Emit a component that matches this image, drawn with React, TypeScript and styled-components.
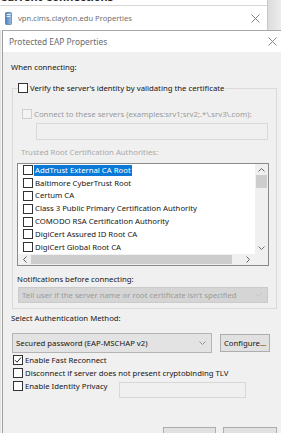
import styled, { createGlobalStyle } from "styled-components";

const GlobalStyle = createGlobalStyle`
  html, body {
    margin: 0;
    padding: 0;
    background: #ffffff;
  }
  body {
    font-family: "Noto Sans", "Open Sans", sans-serif;
    font-size: 7.75px;
    line-height: 12px;
    color: #151515;
  }
  * {
    box-sizing: border-box;
  }
`;

const Screen = styled.div`
  width: 281px;
  height: 433px;
  overflow: hidden;
  display: flex;
  flex-direction: column;
  background: #ffffff;
`;

/* ---- window behind ---- */

const TopArea = styled.div`
  display: flex;
  height: 30px;
  flex-shrink: 0;
`;

const BackWindow = styled.div`
  width: 268px;
  display: flex;
  flex-direction: column;
  border-right: 1px solid #c8c8c8;
`;

const CutHeading = styled.div`
  height: 5px;
  overflow: hidden;
`;

const CutText = styled.span`
  display: block;
  margin-top: -9px;
  font-size: 11px;
  line-height: 12px;
  font-weight: 700;
  color: #2a2a2a;
`;

const BackTitleBar = styled.div`
  flex: 1;
  display: flex;
  align-items: center;
  gap: 6px;
  padding: 0 7px 0 5px;
  border-top: 1px solid #d6d6d6;
  color: #707070;
  font-size: 7.6px;
`;

const Shade = styled.div`
  flex: 1;
  background: linear-gradient(to right, #dcdcdc, #ededed);
`;

const TitleText = styled.span`
  flex: 1;
  white-space: nowrap;
`;

/* ---- dialog ---- */

const LowerArea = styled.div`
  flex: 1;
  display: flex;
  min-height: 0;
`;

const LeftEdge = styled.div`
  width: 2px;
  background: #f7f7f7;
  border-left: 1px solid #e2e2e2;
`;

const Dialog = styled.div`
  flex: 1;
  display: flex;
  flex-direction: column;
  border-left: 1px solid #9c9c9c;
  border-top: 1px solid #a9a9a9;
`;

const DialogTitle = styled.div`
  height: 21px;
  flex-shrink: 0;
  display: flex;
  align-items: center;
  padding: 0 4px 0 6px;
  background: #ffffff;
  color: #6c6c6c;
  font-size: 8.4px;
`;

const DialogBody = styled.div`
  flex: 1;
  background: #f0f0f0;
  padding: 9px 0 0 8px;
  display: flex;
  flex-direction: column;
  align-items: flex-start;
`;

const Label = styled.div<{ $muted?: boolean; $indent?: number; $top?: number }>`
  height: 12px;
  white-space: nowrap;
  margin-left: ${(p) => p.$indent ?? 0}px;
  margin-top: ${(p) => p.$top ?? 0}px;
  color: ${(p) => (p.$muted ? "#a9a9a9" : "#151515")};
`;

const Group = styled.fieldset`
  margin: 9px 4px 0 1px;
  padding: 0 0 5px 4px;
  border: 1px solid #dadada;
  align-self: stretch;
  min-width: 0;
  display: flex;
  flex-direction: column;
  align-items: flex-start;
`;

const GroupLegend = styled.legend`
  margin-left: 1px;
  padding: 0 2px 0 0;
  height: 12px;
`;

const CheckRow = styled.label<{ $indent?: number; $top?: number; $muted?: boolean; $width?: number }>`
  display: flex;
  align-items: center;
  gap: 2px;
  height: 12px;
  white-space: nowrap;
  margin-left: ${(p) => p.$indent ?? 0}px;
  margin-top: ${(p) => p.$top ?? 0}px;
  width: ${(p) => (p.$width ? `${p.$width}px` : "auto")};
  color: ${(p) => (p.$muted ? "#9a9a9a" : "#151515")};
`;

const Box = styled.span<{ $muted?: boolean }>`
  width: 10px;
  height: 10px;
  flex-shrink: 0;
  display: flex;
  align-items: center;
  justify-content: center;
  border: 1px solid ${(p) => (p.$muted ? "#cfcfcf" : "#333333")};
  background: ${(p) => (p.$muted ? "#f3f3f3" : "#ffffff")};
`;

const TextField = styled.div<{ $width: number; $height: number; $indent?: number; $top?: number }>`
  width: ${(p) => p.$width}px;
  height: ${(p) => p.$height}px;
  margin-left: ${(p) => p.$indent ?? 0}px;
  margin-top: ${(p) => p.$top ?? 0}px;
  border: 1px solid #d9d9d9;
  background: #f0f0f0;
  flex-shrink: 0;
`;

/* ---- certificate list ---- */

const ListBox = styled.div`
  width: 252px;
  height: 103px;
  margin-top: 5px;
  border: 1px solid #8a8a8a;
  background: #ffffff;
  display: grid;
  grid-template-columns: 1fr 13px;
  grid-template-rows: 1fr 11px;
`;

const ListItems = styled.div`
  overflow: hidden;
`;

const ListItem = styled.div`
  height: 12.8px;
  display: flex;
  align-items: center;
  gap: 1px;
  padding-left: 5px;
  white-space: nowrap;
`;

const ItemText = styled.span<{ $selected?: boolean }>`
  padding: 0 1px;
  line-height: 11px;
  background: ${(p) => (p.$selected ? "#0a78d7" : "transparent")};
  color: ${(p) => (p.$selected ? "#ffffff" : "#151515")};
`;

const VScroll = styled.div`
  background: #f0f0f0;
  display: flex;
  flex-direction: column;
  align-items: center;
`;

const HScroll = styled.div`
  background: #f0f0f0;
  display: flex;
  align-items: center;
`;

const Corner = styled.div`
  background: #f0f0f0;
`;

const Arrow = styled.div<{ $w: number; $h: number }>`
  width: ${(p) => p.$w}px;
  height: ${(p) => p.$h}px;
  display: flex;
  align-items: center;
  justify-content: center;
  flex-shrink: 0;
`;

const VThumb = styled.div`
  width: 11px;
  height: 13px;
  background: #cdcdcd;
`;

const HThumb = styled.div`
  width: 201px;
  height: 9px;
  background: #cdcdcd;
`;

const Spacer = styled.div`
  flex: 1;
`;

/* ---- combos and buttons ---- */

const Combo = styled.div<{ $width: number; $height: number; $disabled?: boolean; $indent?: number; $top?: number }>`
  width: ${(p) => p.$width}px;
  height: ${(p) => p.$height}px;
  margin-left: ${(p) => p.$indent ?? 0}px;
  margin-top: ${(p) => p.$top ?? 0}px;
  display: flex;
  align-items: center;
  padding: 0 5px 0 3px;
  white-space: nowrap;
  flex-shrink: 0;
  background: ${(p) => (p.$disabled ? "#d5d5d5" : "#e3e3e3")};
  border: 1px solid ${(p) => (p.$disabled ? "#cacaca" : "#b4b4b4")};
  color: ${(p) => (p.$disabled ? "#9b9b9b" : "#151515")};
`;

const ComboText = styled.span`
  flex: 1;
  overflow: hidden;
`;

const AuthRow = styled.div`
  display: flex;
  align-items: center;
  margin-top: 9px;
  margin-left: 1px;
`;

const Button = styled.div<{ $width: number; $height: number }>`
  width: ${(p) => p.$width}px;
  height: ${(p) => p.$height}px;
  display: flex;
  align-items: center;
  justify-content: center;
  background: #e1e1e1;
  border: 1px solid #adadad;
  color: #151515;
  flex-shrink: 0;
`;

const ConfigureButton = styled(Button)`
  margin-left: 8px;
`;

const IdentityRow = styled.div`
  display: flex;
  align-items: flex-start;
  margin-top: 1px;
`;

const ButtonRow = styled.div`
  align-self: stretch;
  display: flex;
  justify-content: flex-end;
  gap: 7px;
  margin-top: 29px;
  padding-right: 4px;
`;

/* ---- drawings ---- */

const CloseX = ({ color = "#7a7a7a" }: { color?: string }) => (
  <svg width="9" height="9" viewBox="0 0 9 9">
    <path d="M0.5 0.5 L8.5 8.5 M8.5 0.5 L0.5 8.5" stroke={color} strokeWidth="0.9" />
  </svg>
);

const ChevronDown = ({ color = "#8a8a8a" }: { color?: string }) => (
  <svg width="7" height="4" viewBox="0 0 7 4">
    <path d="M0.5 0.5 L3.5 3.5 L6.5 0.5" fill="none" stroke={color} strokeWidth="0.9" />
  </svg>
);

const ChevronUp = () => (
  <svg width="7" height="4" viewBox="0 0 7 4">
    <path d="M0.5 3.5 L3.5 0.5 L6.5 3.5" fill="none" stroke="#606060" strokeWidth="1" />
  </svg>
);

const ChevronSide = ({ dir }: { dir: "left" | "right" }) => (
  <svg width="4" height="7" viewBox="0 0 4 7">
    <path
      d={dir === "left" ? "M3.5 0.5 L0.5 3.5 L3.5 6.5" : "M0.5 0.5 L3.5 3.5 L0.5 6.5"}
      fill="none"
      stroke="#606060"
      strokeWidth="1"
    />
  </svg>
);

const Tick = () => (
  <svg width="8" height="8" viewBox="0 0 8 8">
    <path d="M1 4.2 L3 6.2 L7 1.5" fill="none" stroke="#222" strokeWidth="1" />
  </svg>
);

const DeviceIcon = () => (
  <svg width="7" height="13" viewBox="0 0 7 13">
    <defs>
      <linearGradient id="dev" x1="0" y1="0" x2="1" y2="0">
        <stop offset="0" stopColor="#4f7fb8" />
        <stop offset="1" stopColor="#9cc0e6" />
      </linearGradient>
    </defs>
    <rect x="0.5" y="0.5" width="6" height="12" rx="0.8" fill="url(#dev)" stroke="#3d6494" strokeWidth="0.6" />
    <rect x="1.6" y="2" width="3.8" height="1" fill="#e6f0fb" />
    <rect x="1.6" y="4" width="3.8" height="1" fill="#e6f0fb" />
  </svg>
);

const Check = ({ checked, muted }: { checked?: boolean; muted?: boolean }) => (
  <Box $muted={muted}>{checked && <Tick />}</Box>
);

const authorities = [
  "AddTrust External CA Root",
  "Baltimore CyberTrust Root",
  "Certum CA",
  "Class 3 Public Primary Certification Authority",
  "COMODO RSA Certification Authority",
  "DigiCert Assured ID Root CA",
  "DigiCert Global Root CA",
];

const App = () => {
  return (
    <Screen>
      <GlobalStyle />
      <TopArea>
        <BackWindow>
          <CutHeading>
            <CutText>Current Connections</CutText>
          </CutHeading>
          <BackTitleBar>
            <DeviceIcon />
            <TitleText>vpn.cims.clayton.edu Properties</TitleText>
            <CloseX />
          </BackTitleBar>
        </BackWindow>
        <Shade />
      </TopArea>

      <LowerArea>
        <LeftEdge />
        <Dialog>
          <DialogTitle>
            <TitleText>Protected EAP Properties</TitleText>
            <CloseX />
          </DialogTitle>

          <DialogBody>
            <Label>When connecting:</Label>

            <Group>
              <GroupLegend>
                <CheckRow>
                  <Check />
                  Verify the server’s identity by validating the certificate
                </CheckRow>
              </GroupLegend>

              <CheckRow $indent={5} $top={14} $muted>
                <Check muted />
                Connect to these servers (examples:srv1;srv2;.*\.srv3\.com):
              </CheckRow>
              <TextField $width={232} $height={17} $indent={19} $top={3} />

              <Label $muted $indent={4} $top={6}>
                Trusted Root Certification Authorities:
              </Label>

              <ListBox>
                <ListItems>
                  {authorities.map((name, i) => (
                    <ListItem key={name}>
                      <Check />
                      <ItemText $selected={i === 0}>{name}</ItemText>
                    </ListItem>
                  ))}
                </ListItems>
                <VScroll>
                  <Arrow $w={13} $h={11}>
                    <ChevronUp />
                  </Arrow>
                  <VThumb />
                  <Spacer />
                  <Arrow $w={13} $h={13}>
                    <ChevronDown color="#606060" />
                  </Arrow>
                </VScroll>
                <HScroll>
                  <Arrow $w={13} $h={11}>
                    <ChevronSide dir="left" />
                  </Arrow>
                  <HThumb />
                  <Spacer />
                  <Arrow $w={14} $h={11}>
                    <ChevronSide dir="right" />
                  </Arrow>
                </HScroll>
                <Corner />
              </ListBox>

              <Label $top={7}>Notifications before connecting:</Label>
              <Combo $width={250} $height={16} $indent={1} $top={2} $disabled>
                <ComboText>Tell user if the server name or root certificate isn’t specified</ComboText>
                <ChevronDown color="#bdbdbd" />
              </Combo>
            </Group>

            <Label $top={3}>Select Authentication Method:</Label>
            <AuthRow>
              <Combo $width={200} $height={20}>
                <ComboText>Secured password (EAP-MSCHAP v2)</ComboText>
                <ChevronDown />
              </Combo>
              <ConfigureButton $width={50} $height={18}>
                Configure...
              </ConfigureButton>
            </AuthRow>

            <CheckRow $indent={2} $top={1}>
              <Check checked />
              Enable Fast Reconnect
            </CheckRow>
            <CheckRow $indent={2} $top={1}>
              <Check />
              Disconnect if server does not present cryptobinding TLV
            </CheckRow>
            <IdentityRow>
              <CheckRow $indent={2} $width={106}>
                <Check />
                Enable Identity Privacy
              </CheckRow>
              <TextField $width={127} $height={16} $top={2} />
            </IdentityRow>

            <ButtonRow>
              <Button $width={53} $height={23}>
                OK
              </Button>
              <Button $width={54} $height={23}>
                Cancel
              </Button>
            </ButtonRow>
          </DialogBody>
        </Dialog>
      </LowerArea>
    </Screen>
  );
};

export default App;
